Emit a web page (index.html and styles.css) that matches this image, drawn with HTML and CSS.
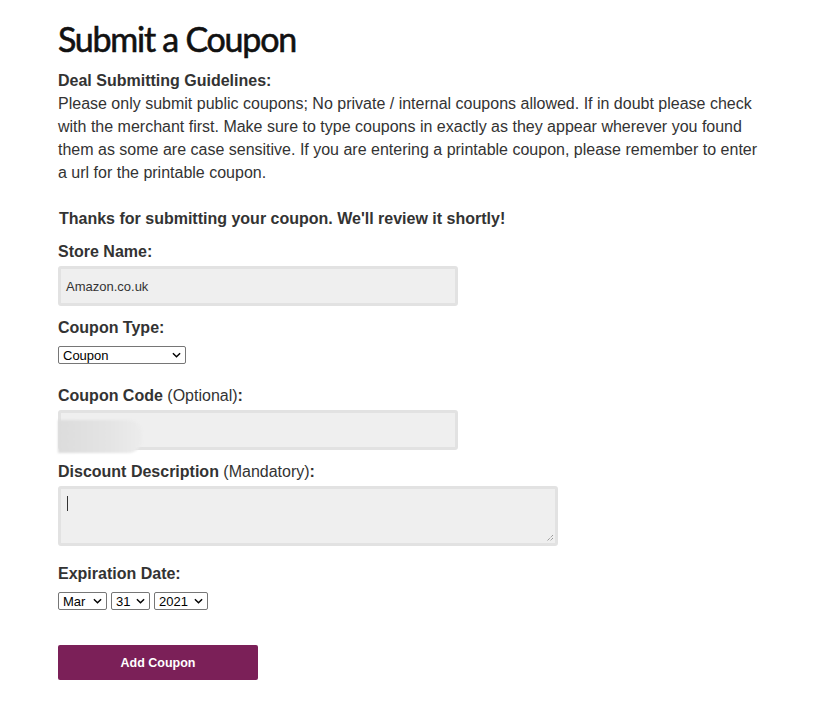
FILE: index.html
```html
<!DOCTYPE html>
<html>
<head>
<meta charset="utf-8">
<link rel="stylesheet" href="styles.css">
</head>
<body>
<div class="page">
  <h1 class="title">Submit a Coupon</h1>
  <p class="guide"><strong>Deal Submitting Guidelines:</strong><br>Please only submit public coupons; No private / internal coupons allowed. If in doubt please check with the merchant first. Make sure to type coupons in exactly as they appear wherever you found them as some are case sensitive. If you are entering a printable coupon, please remember to enter a url for the printable coupon.</p>
  <p class="thanks">Thanks for submitting your coupon. We'll review it shortly!</p>
  <form class="form">
    <label class="lbl">Store Name:</label>
    <div class="field field-store"><span class="val">Amazon.co.uk</span></div>
    <label class="lbl lbl-type">Coupon Type:</label>
    <div class="sel sel-type"><span>Coupon</span><svg class="chev" viewBox="0 0 10 6"><path d="M1 1l4 4 4-4" fill="none" stroke="#000" stroke-width="1.6"/></svg></div>
    <label class="lbl lbl-code">Coupon Code <span class="norm">(Optional)</span>:</label>
    <div class="field field-code"><span class="blur"></span></div>
    <label class="lbl lbl-desc">Discount Description <span class="norm">(Mandatory)</span>:</label>
    <div class="area"><span class="caret"></span><svg class="grip" viewBox="0 0 8 8"><path d="M7 1L1 7M7 4L4 7" stroke="#777" stroke-width="1" stroke-dasharray="1 1"/></svg></div>
    <label class="lbl lbl-date">Expiration Date:</label>
    <div class="dates">
      <div class="sel sel-mon"><span>Mar</span><svg class="chev" viewBox="0 0 10 6"><path d="M1 1l4 4 4-4" fill="none" stroke="#000" stroke-width="1.6"/></svg></div>
      <div class="sel sel-day"><span>31</span><svg class="chev" viewBox="0 0 10 6"><path d="M1 1l4 4 4-4" fill="none" stroke="#000" stroke-width="1.6"/></svg></div>
      <div class="sel sel-year"><span>2021</span><svg class="chev" viewBox="0 0 10 6"><path d="M1 1l4 4 4-4" fill="none" stroke="#000" stroke-width="1.6"/></svg></div>
    </div>
    <div class="btn">Add Coupon</div>
  </form>
</div>
</body>
</html>
```
FILE: styles.css
```css
* { box-sizing: border-box; }
html, body { margin: 0; padding: 0; background: #fff; }
body { font-family: "Liberation Sans", Arial, sans-serif; color: #333; }
.page { padding: 0 0 0 58px; width: 770px; }
.title {
  font-family: Lato, "Liberation Sans", sans-serif;
  font-weight: 400;
  -webkit-text-stroke: 0.6px #111;
  font-size: 34px;
  line-height: 40px;
  letter-spacing: -1.25px;
  color: #111;
  margin: 19px 0 0 0;
}
.guide {
  font-size: 16px;
  line-height: 23px;
  margin: 10px 0 0 0;
}
.thanks {
  font-size: 16px;
  font-weight: 700;
  line-height: 23px;
  margin: 23px 0 0 1px;
}
.form { display: flex; flex-direction: column; align-items: flex-start; }
.lbl {
  font-size: 16px;
  font-weight: 700;
  line-height: 23px;
  display: block;
  margin-top: 10px;
}
.lbl .norm { font-weight: 400; }
.lbl-type { margin-top: 10px; }
.lbl-code { margin-top: 20px; }
.lbl-desc { margin-top: 10px; }
.lbl-date { margin-top: 16px; }
.field {
  width: 400px;
  height: 40px;
  margin-top: 3px;
  background: #efefef;
  border: 3px solid #e2e2e2;
  border-radius: 3px;
  display: flex;
  align-items: center;
  padding-left: 5px;
  position: relative;
}
.val { font-size: 13px; color: #333; }
.blur {
  position: absolute;
  left: -3px;
  top: 7px;
  width: 84px;
  height: 33px;
  border-radius: 0 14px 14px 0;
  background: linear-gradient(90deg, #dcdcdc 0%, #e0e0e0 30%, #e4e4e4 60%, #ececec 100%);
  filter: blur(1px);
}
.area {
  width: 500px;
  height: 60px;
  margin-top: 3px;
  background: #efefef;
  border: 3px solid #e2e2e2;
  border-radius: 3px;
  position: relative;
}
.caret {
  position: absolute;
  left: 6px;
  top: 7px;
  width: 1px;
  height: 15px;
  background: #333;
}
.grip { position: absolute; right: 1px; bottom: 1px; width: 8px; height: 8px; }
.sel {
  height: 18px;
  border: 1px solid #767676;
  border-radius: 2px;
  background: #fff;
  display: flex;
  align-items: center;
  justify-content: space-between;
  padding: 0 4px 0 4px;
  font-size: 13px;
  color: #000;
}
.chev { width: 9px; height: 6px; }
.sel-type { width: 128px; margin-top: 7px; }
.dates { display: flex; gap: 5px; margin-top: 7px; }
.sel-mon { width: 49px; }
.sel-day { width: 39px; }
.sel-year { width: 54px; }
.sel-day, .sel-year { margin-left: -1px; }
.btn {
  margin-top: 35px;
  width: 200px;
  height: 35px;
  background: #7b2058;
  border-radius: 2px;
  color: #fff;
  font-size: 12.5px;
  font-weight: 700;
  display: flex;
  align-items: center;
  justify-content: center;
}
```
